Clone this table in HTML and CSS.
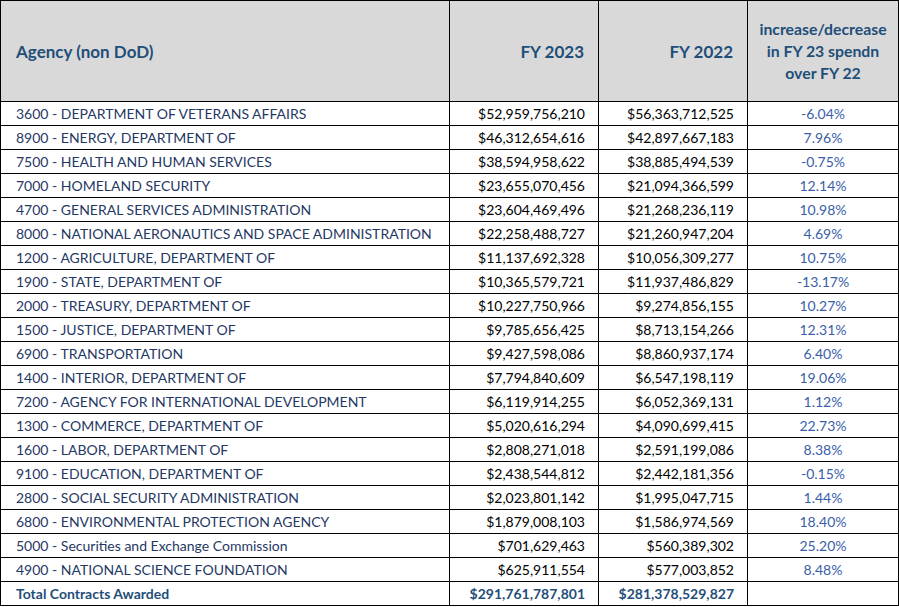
FILE: index.html
```html
<!DOCTYPE html>
<html>
<head>
<meta charset="utf-8">
<link rel="stylesheet" href="styles.css">
</head>
<body>
<table class="spend">
  <colgroup>
    <col class="c-agency"><col class="c-num"><col class="c-num2"><col class="c-pct">
  </colgroup>
  <thead>
    <tr>
      <th class="h-agency">Agency (non DoD)</th>
      <th class="h-num">FY 2023</th>
      <th class="h-num">FY 2022</th>
      <th class="h-pct">increase/decrease<br>in FY 23 spendn<br>over FY 22</th>
    </tr>
  </thead>
  <tbody>
    <tr><td class="agency">3600 - DEPARTMENT OF VETERANS AFFAIRS</td><td class="num">$52,959,756,210</td><td class="num">$56,363,712,525</td><td class="pct">-6.04%</td></tr>
    <tr><td class="agency">8900 - ENERGY, DEPARTMENT OF</td><td class="num">$46,312,654,616</td><td class="num">$42,897,667,183</td><td class="pct">7.96%</td></tr>
    <tr><td class="agency">7500 - HEALTH AND HUMAN SERVICES</td><td class="num">$38,594,958,622</td><td class="num">$38,885,494,539</td><td class="pct">-0.75%</td></tr>
    <tr><td class="agency">7000 - HOMELAND SECURITY</td><td class="num">$23,655,070,456</td><td class="num">$21,094,366,599</td><td class="pct">12.14%</td></tr>
    <tr><td class="agency">4700 - GENERAL SERVICES ADMINISTRATION</td><td class="num">$23,604,469,496</td><td class="num">$21,268,236,119</td><td class="pct">10.98%</td></tr>
    <tr><td class="agency">8000 - NATIONAL AERONAUTICS AND SPACE ADMINISTRATION</td><td class="num">$22,258,488,727</td><td class="num">$21,260,947,204</td><td class="pct">4.69%</td></tr>
    <tr><td class="agency">1200 - AGRICULTURE, DEPARTMENT OF</td><td class="num">$11,137,692,328</td><td class="num">$10,056,309,277</td><td class="pct">10.75%</td></tr>
    <tr><td class="agency">1900 - STATE, DEPARTMENT OF</td><td class="num">$10,365,579,721</td><td class="num">$11,937,486,829</td><td class="pct">-13.17%</td></tr>
    <tr><td class="agency">2000 - TREASURY, DEPARTMENT OF</td><td class="num">$10,227,750,966</td><td class="num">$9,274,856,155</td><td class="pct">10.27%</td></tr>
    <tr><td class="agency">1500 - JUSTICE, DEPARTMENT OF</td><td class="num">$9,785,656,425</td><td class="num">$8,713,154,266</td><td class="pct">12.31%</td></tr>
    <tr><td class="agency">6900 - TRANSPORTATION</td><td class="num">$9,427,598,086</td><td class="num">$8,860,937,174</td><td class="pct">6.40%</td></tr>
    <tr><td class="agency">1400 - INTERIOR, DEPARTMENT OF</td><td class="num">$7,794,840,609</td><td class="num">$6,547,198,119</td><td class="pct">19.06%</td></tr>
    <tr><td class="agency">7200 - AGENCY FOR INTERNATIONAL DEVELOPMENT</td><td class="num">$6,119,914,255</td><td class="num">$6,052,369,131</td><td class="pct">1.12%</td></tr>
    <tr><td class="agency">1300 - COMMERCE, DEPARTMENT OF</td><td class="num">$5,020,616,294</td><td class="num">$4,090,699,415</td><td class="pct">22.73%</td></tr>
    <tr><td class="agency">1600 - LABOR, DEPARTMENT OF</td><td class="num">$2,808,271,018</td><td class="num">$2,591,199,086</td><td class="pct">8.38%</td></tr>
    <tr><td class="agency">9100 - EDUCATION, DEPARTMENT OF</td><td class="num">$2,438,544,812</td><td class="num">$2,442,181,356</td><td class="pct">-0.15%</td></tr>
    <tr><td class="agency">2800 - SOCIAL SECURITY ADMINISTRATION</td><td class="num">$2,023,801,142</td><td class="num">$1,995,047,715</td><td class="pct">1.44%</td></tr>
    <tr><td class="agency">6800 - ENVIRONMENTAL PROTECTION AGENCY</td><td class="num">$1,879,008,103</td><td class="num">$1,586,974,569</td><td class="pct">18.40%</td></tr>
    <tr><td class="agency">5000 - Securities and Exchange Commission</td><td class="num">$701,629,463</td><td class="num">$560,389,302</td><td class="pct">25.20%</td></tr>
    <tr><td class="agency">4900 - NATIONAL SCIENCE FOUNDATION</td><td class="num">$625,911,554</td><td class="num">$577,003,852</td><td class="pct">8.48%</td></tr>
    <tr class="total"><td class="agency">Total Contracts Awarded</td><td class="num">$291,761,787,801</td><td class="num">$281,378,529,827</td><td class="pct"></td></tr>
  </tbody>
</table>
</body>
</html>
```

FILE: styles.css
```css
html, body {
  margin: 0;
  padding: 0;
  background: #ffffff;
}

.spend {
  border-collapse: collapse;
  table-layout: fixed;
  width: 898px;
  font-family: Lato, "Liberation Sans", sans-serif;
  font-size: 14px;
  color: #000;
}

.c-agency { width: 449px; }
.c-num { width: 149px; }
.c-num2 { width: 149px; }
.c-pct { width: 151px; }

.spend th,
.spend td {
  border: 1px solid #000;
  padding: 0;
  white-space: nowrap;
}

.spend thead th {
  background: #d9d9d9;
  height: 100px;
  color: #1f4e79;
  font-weight: 700;
  font-size: 17px;
  vertical-align: middle;
}

.h-agency {
  text-align: left;
  padding-left: 15px !important;
}

.h-num {
  text-align: right;
  padding-right: 14px !important;
}

.spend thead th.h-pct {
  text-align: center;
  line-height: 22px;
  font-size: 15.8px;
}

.spend tbody td {
  height: 22px;
  line-height: 22px;
  padding-top: 1px;
}

.agency {
  text-align: left;
  padding-left: 15px !important;
  color: #1f3864;
}

.num {
  text-align: right;
  padding-right: 13px !important;
}

.pct {
  text-align: center;
  color: #3a5ea8;
}

.total td {
  font-weight: 700;
  color: #1f4e79;
}
```
